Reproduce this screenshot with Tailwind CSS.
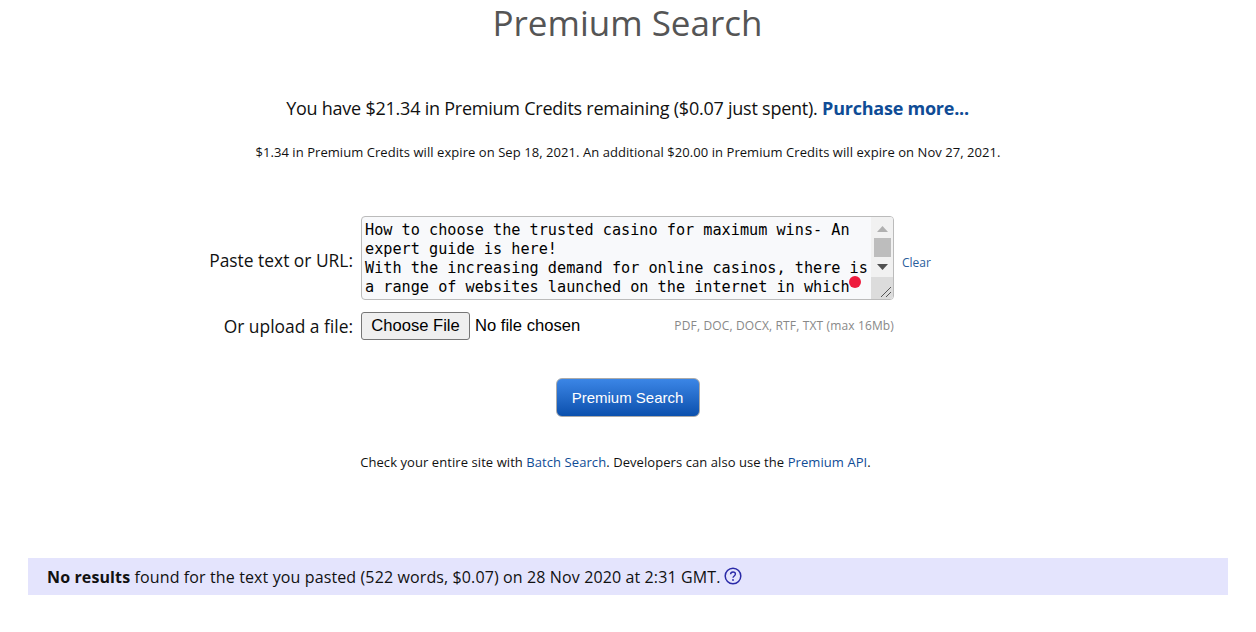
<!DOCTYPE html>
<html lang="en">
  <head>
    <meta charset="UTF-8" />
    <meta name="viewport" content="width=device-width, initial-scale=1.0" />
    <title>Premium Search</title>
    <script src="https://cdn.jsdelivr.net/npm/@tailwindcss/browser@4"></script>
  </head>
  <body class="bg-white font-['Open_Sans',sans-serif] text-[#111]">
    <h1 class="text-center text-[35px] leading-[46px] text-[#555] pr-[1px]">Premium Search</h1>

    <p class="text-center text-[18px] leading-[24px] mt-[50px] tracking-[-0.235px] pr-[1px]">
      You have $21.34 in Premium Credits remaining ($0.07 just spent).
      <a href="#" class="font-bold text-[#0f4c96]">Purchase more...</a>
    </p>
    <p class="text-center text-[13px] leading-[16px] mt-[24px] tracking-[0.06px]">
      $1.34 in Premium Credits will expire on Sep 18, 2021. An additional $20.00 in Premium Credits will expire on Nov 27, 2021.
    </p>

    <form class="mt-[56px]">
      <div class="flex items-center">
        <label class="w-[353px] text-right text-[17.4px] leading-[24px] pt-[4px]">Paste text or URL:</label>
        <div class="relative ml-[8px] w-[533px] h-[84px] border border-[#bbb] rounded-[4px] bg-[#f8f9fb] overflow-hidden">
          <textarea class="block w-[510px] h-[82px] pl-[3px] pt-[4px] resize-none overflow-hidden outline-none font-['DejaVu_Sans_Mono',monospace] text-[15.2px] leading-[19px] text-black">How to choose the trusted casino for maximum wins- An expert guide is here!
With the increasing demand for online casinos, there is a range of websites launched on the internet in which</textarea>
          <div class="absolute right-0 top-0 w-[22px] h-[82px] bg-[#f1f1f1] flex flex-col items-center">
            <svg class="mt-[9px]" width="11" height="6" viewBox="0 0 11 6"><path d="M5.5 0L11 6H0z" fill="#b0b0b0" /></svg>
            <div class="mt-[6px] w-[17px] h-[19px] bg-[#bdbdbd]"></div>
            <svg class="mt-[7px]" width="11" height="6" viewBox="0 0 11 6"><path d="M0 0H11L5.5 6z" fill="#505050" /></svg>
            <div class="relative mt-auto w-[22px] h-[22px] bg-[#dcdcdc]">
              <svg class="absolute right-[1px] bottom-[1px]" width="12" height="12" viewBox="0 0 12 12"><path d="M1 11L11 1M6 11L11 6" stroke="#555" stroke-width="1" fill="none" /></svg>
            </div>
          </div>
          <span class="absolute left-[487px] top-[59px] w-[12px] h-[12px] rounded-full bg-[#ee1c3e]"></span>
        </div>
        <a href="#" class="ml-[8px] mt-[10px] text-[12px] leading-[16px] text-[#2a5d9c]">Clear</a>
      </div>

      <div class="flex items-center mt-[12px]">
        <label class="w-[353px] text-right text-[17.4px] leading-[24px]">Or upload a file:</label>
        <div class="ml-[8px] w-[533px] flex items-center justify-between">
          <input type="file" class="w-[300px] font-['Liberation_Sans',sans-serif] text-[16.6px] text-black file:w-[109px] file:h-[28px] file:mr-[5px] file:border file:border-[#767676] file:rounded-[3px] file:bg-[#efefef] file:text-black" />
          <span class="text-[12px] leading-[16px] text-[#888] tracking-[0.14px]">PDF, DOC, DOCX, RTF, TXT (max 16Mb)</span>
        </div>
      </div>

      <div class="flex justify-center mt-[38px] pr-[1px]">
        <button type="button" class="w-[144px] h-[39px] pt-[1px] rounded-[6px] border border-[#aaa] bg-gradient-to-b from-[#3b86e6] to-[#0a50ad] font-['Liberation_Sans',sans-serif] text-[15px] text-white">Premium Search</button>
      </div>
    </form>

    <p class="text-center text-[13px] leading-[16px] mt-[37px] tracking-[0.07px] pr-[25px]">
      Check your entire site with <a href="#" class="text-[#0f4c96]">Batch Search</a>. Developers can also use the <a href="#" class="text-[#0f4c96]">Premium API</a>.
    </p>

    <div class="mx-[28px] mt-[88px] h-[37px] bg-[#e4e4fd] pl-[19px] flex items-center text-[16px] tracking-[0.12px]">
      <span><b class="font-bold">No results</b> found for the text you pasted (522 words, $0.07) on 28 Nov 2020 at 2:31 GMT.</span>
      <svg class="ml-[3px] mb-[2px]" width="18" height="18" viewBox="0 0 18 18" fill="none">
        <circle cx="9" cy="9" r="7.8" stroke="#2a2aa8" stroke-width="1.5" />
        <path d="M6.6 7.2C6.6 5.8 7.7 5 9 5s2.4.8 2.4 2.1c0 1.9-2.4 1.9-2.4 3.7" stroke="#2a2aa8" stroke-width="1.4" />
        <circle cx="9" cy="13" r="0.9" fill="#2a2aa8" />
      </svg>
    </div>
  </body>
</html>
